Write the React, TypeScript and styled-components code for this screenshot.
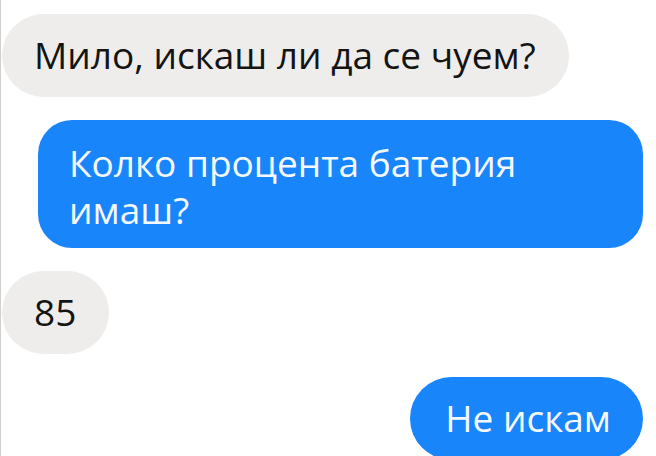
import styled, { createGlobalStyle } from 'styled-components';

const GlobalStyle = createGlobalStyle`
	html, body {
		margin: 0;
		padding: 0;
		background: #ffffff;
	}

	body {
		font-family: 'Open Sans', 'Noto Sans', sans-serif;
	}
`;

type Side = 'in' | 'out';

const messages: { id: number; side: Side; text: string }[] = [
	{ id: 1, side: 'in', text: 'Мило, искаш ли да се чуем?' },
	{ id: 2, side: 'out', text: 'Колко процента батерия имаш?' },
	{ id: 3, side: 'in', text: '85' },
	{ id: 4, side: 'out', text: 'Не искам' },
];

const App = () => {
	return (
		<>
			<GlobalStyle />
			<Chat>
				<Row $side='in'>
					<Bubble $side='in'>{messages[0].text}</Bubble>
				</Row>
				<Row $side='in' $indent>
					<WideBubble $side='out'>{messages[1].text}</WideBubble>
				</Row>
				<Row $side='in'>
					<Bubble $side='in'>{messages[2].text}</Bubble>
				</Row>
				<Row $side='out'>
					<Bubble $side='out'>{messages[3].text}</Bubble>
				</Row>
			</Chat>
		</>
	);
};

const Chat = styled.main`
	display: flex;
	flex-direction: column;
	gap: 23px;
	height: 456px;
	box-sizing: border-box;
	padding: 14px 13px 0 1px;
	border-left: 1px solid #cfcfcf;
	overflow: hidden;
`;

const Row = styled.div<{ $side: Side; $indent?: boolean }>`
	display: flex;
	justify-content: ${(p) => (p.$side === 'out' ? 'flex-end' : 'flex-start')};
	padding-left: ${(p) => (p.$indent ? '36px' : '0')};
`;

const Bubble = styled.div<{ $side: Side }>`
	display: flex;
	align-items: center;
	height: 83px;
	box-sizing: border-box;
	padding: ${(p) => (p.$side === 'out' ? '0 32px 2px 35px' : '0 33px 2px 32px')};
	border-radius: 42px;
	font-size: 37px;
	background: ${(p) => (p.$side === 'out' ? '#1985fa' : '#eeedeb')};
	color: ${(p) => (p.$side === 'out' ? '#f4f9ff' : '#141414')};
`;

const WideBubble = styled(Bubble)`
	width: 609px;
	height: 128px;
	padding: 4px 60px 0 31px;
	border-radius: 34px;
	line-height: 47px;
`;

export default App;
